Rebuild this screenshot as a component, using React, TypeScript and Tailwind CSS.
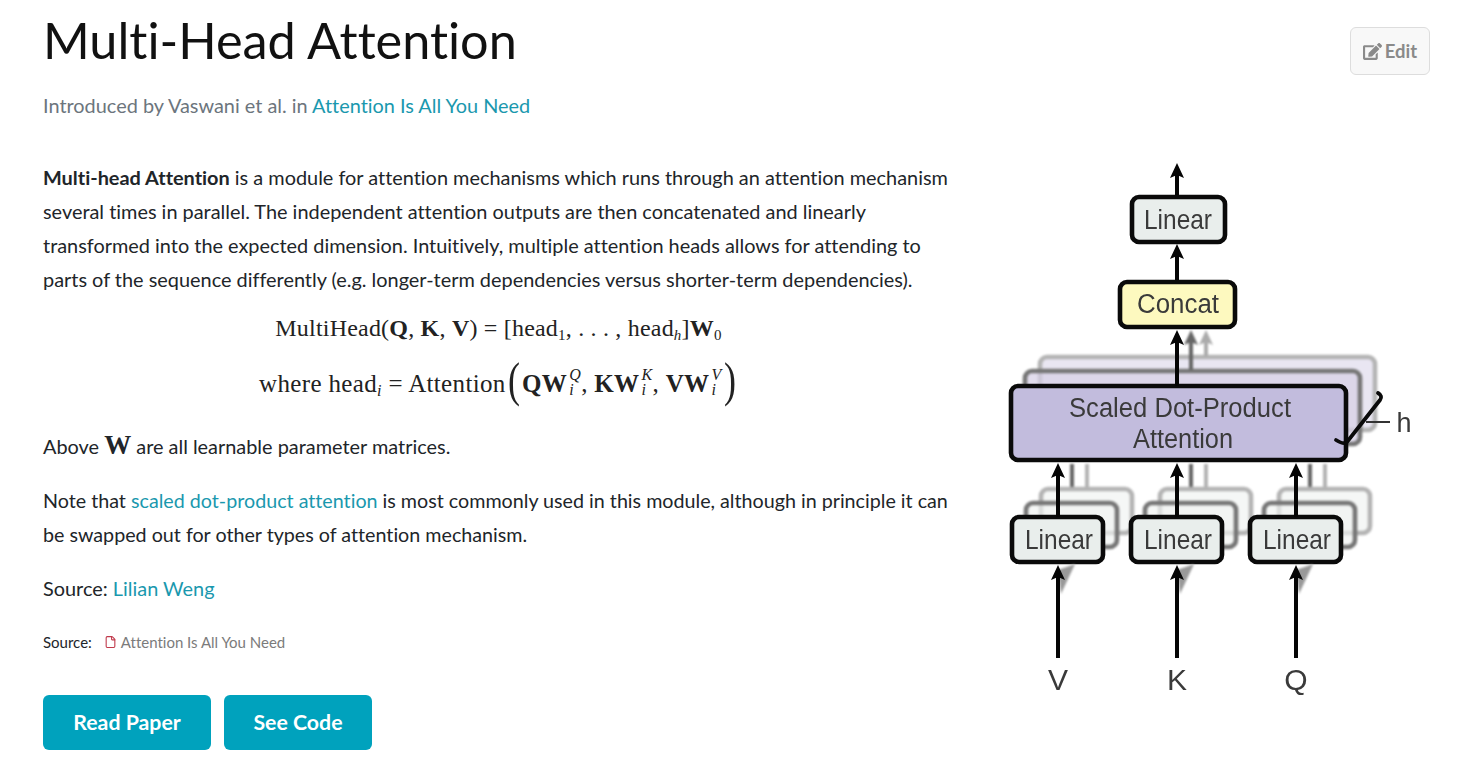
import { FaEdit } from "react-icons/fa";
import { File } from "lucide-react";

const font = { fontFamily: '"Liberation Sans", sans-serif' };
const ink = "#3a3a3a";

const Box = ({ x, y, w, h, fill, stroke = "#0a0a0a", sw = 4.6, r = 7, fo = 1, so = 1 }: any) => (
  <rect x={x} y={y} width={w} height={h} rx={r} fill={fill} fillOpacity={fo} stroke={stroke} strokeOpacity={so} strokeWidth={sw} />
);

const Arrow = ({ x, y1, y2, color = "#050505", sw = 4 }: any) => (
  <g>
    <line x1={x} y1={y1} x2={x} y2={y2 + 8} stroke={color} strokeWidth={sw} />
    <path d={`M${x} ${y2} L${x + 7} ${y2 + 15} L${x} ${y2 + 12} L${x - 7} ${y2 + 15} Z`} fill={color} />
  </g>
);

const Lin = ({ x, t }: any) => (
  <text x={x} y={t} textAnchor="middle" fontSize="28" fill={ink} style={font} textLength={68} lengthAdjust="spacingAndGlyphs">
    Linear
  </text>
);

function Diagram() {
  const ox = 1000;
  const oy = 150;
  const X = (v: number) => v - ox;
  const Y = (v: number) => v - oy;
  const lower = [
    { bx: 1011, ax: 1058 },
    { bx: 1130, ax: 1177 },
    { bx: 1249, ax: 1296 },
  ];
  return (
    <svg width="430" height="560" viewBox="0 0 430 560" className="block shrink-0 blur-[0.6px]">
      {/* top */}
      <Arrow x={X(1177)} y1={Y(196)} y2={Y(163)} />
      <Box x={X(1132)} y={Y(197)} w={93} h={45} fill="#e9eeec" />
      <Lin x={X(1178)} t={Y(229)} />
      <Arrow x={X(1177)} y1={Y(281)} y2={Y(244)} />
      <Box x={X(1120)} y={Y(282)} w={115} h={45} fill="#fdf9bf" />
      <text x={X(1178)} y={Y(313)} textAnchor="middle" fontSize="27" fill={ink} style={font} textLength={82} lengthAdjust="spacingAndGlyphs">
        Concat
      </text>

      {/* stacked attention */}
      <g className="blur-[0.8px]">
        <Box x={X(1040)} y={Y(357)} w={335} h={73} fill="#e9e6f2" stroke="#b4b4b4" />
        <Arrow x={X(1206)} y1={Y(356)} y2={Y(330)} color="#ababab" />
        <Box x={X(1025)} y={Y(371)} w={335} h={73} fill="#d5cfe6" fo={0.7} stroke="#767676" />
        <Arrow x={X(1191)} y1={Y(370)} y2={Y(330)} color="#666" />
      </g>
      <Box x={X(1011)} y={Y(386)} w={335} h={74} fill="#c2bcdd" />
      <Arrow x={X(1177)} y1={Y(386)} y2={Y(330)} />
      <text x={X(1180)} y={Y(417)} textAnchor="middle" fontSize="27" fill={ink} style={font} textLength={222} lengthAdjust="spacingAndGlyphs">
        Scaled Dot-Product
      </text>
      <text x={X(1183)} y={Y(448)} textAnchor="middle" fontSize="27" fill={ink} style={font} textLength={100} lengthAdjust="spacingAndGlyphs">
        Attention
      </text>
      <path d="M1378 393 Q1383 396 1380 400 L1347 442 Q1344 445 1336 440" transform={`translate(${-ox} ${-oy})`} fill="none" stroke="#0a0a0a" strokeWidth="3.8" strokeLinecap="round" />
      <line x1={X(1366)} y1={Y(422)} x2={X(1390)} y2={Y(422)} stroke="#333" strokeWidth="2" />
      <text x={X(1404)} y={Y(432)} textAnchor="middle" fontSize="27" fill={ink} style={font}>
        h
      </text>

      {/* lower linear groups */}
      {lower.map((l) => (
        <g key={l.bx}>
          <g className="blur-[0.8px]">
            <line x1={X(l.ax + 29)} y1={Y(464)} x2={X(l.ax + 29)} y2={Y(490)} stroke="#b4b4b4" strokeWidth="4" />
            <line x1={X(l.ax + 14)} y1={Y(464)} x2={X(l.ax + 14)} y2={Y(504)} stroke="#666" strokeWidth="4" />
            <Box x={l.bx + 30 - ox} y={Y(489)} w={91} h={44} fill="#f5f7f6" stroke="#b4b4b4" />
            <Box x={l.bx + 15 - ox} y={Y(503)} w={91} h={44} fill="#eff2f1" fo={0.65} stroke="#767676" />
          </g>
          <Box x={l.bx + 1 - ox} y={Y(517)} w={91} h={45} fill="#e9eeec" />
          <Arrow x={X(l.ax)} y1={Y(517)} y2={Y(463)} />
          <Lin x={X(l.ax + 1)} t={Y(549)} />
          <path className="blur-[0.8px]" d={`M${l.ax + 17 - ox} ${Y(564)} L${l.ax + 3 - ox} ${Y(594)} L${l.ax - ox} ${Y(570)} Z`} fill="#999" />
          <Arrow x={X(l.ax)} y1={Y(658)} y2={Y(565)} />
        </g>
      ))}
      {[
        ["V", 1058],
        ["K", 1177],
        ["Q", 1296],
      ].map(([t, x]) => (
        <text key={t as string} x={X(x as number)} y={Y(690)} textAnchor="middle" fontSize="30" fill={ink} style={font}>
          {t}
        </text>
      ))}
    </svg>
  );
}

const B = ({ children }: any) => <b className="font-bold">{children}</b>;

const SubSup = ({ sub, sup }: any) => (
  <span className="inline-flex flex-col items-start leading-[13px] text-[16px] italic ml-[2px] -translate-y-[1px]">
    <span className="-mt-2">{sup}</span>
    <span className="-mb-2 mt-[2px]">{sub}</span>
  </span>
);

function Formula() {
  return (
    <div className="font-['Liberation_Serif',serif] leading-none text-[#222]">
      <div className="flex h-[34px] justify-center items-center text-[24px] tracking-[0.2px]">
        <span className="whitespace-pre">
          MultiHead(<B>Q</B>, <B>K</B>, <B>V</B>) = [head<sub className="text-[15px]">1</sub>, . . . , head<sub className="text-[15px] italic">h</sub>]<B>W</B><sub className="text-[15px]">0</sub>
        </span>
      </div>
      <div className="flex h-[56px] mt-[10px] justify-center items-center whitespace-pre text-[25px] tracking-[0.35px]">
        <span>where head<sub className="text-[16px] italic">i</sub> = Attention</span>
        <span className="text-[48px] font-light -mt-[6px] scale-x-75">(</span>
        <B>QW</B>
        <SubSup sup="Q" sub="i" />
        <span>, </span>
        <B>KW</B>
        <SubSup sup="K" sub="i" />
        <span>, </span>
        <B>VW</B>
        <SubSup sup="V" sub="i" />
        <span className="text-[48px] font-light -mt-[6px] scale-x-75">)</span>
      </div>
    </div>
  );
}

export default function App() {
  return (
    <div className="h-[777px] overflow-hidden bg-white font-['Lato',sans-serif] [font-variant-ligatures:none] text-[#212529] pl-[43px] pr-[30px]">
      <div className="flex justify-between items-start h-[150px]">
        <div>
          <h1 className="text-[50.4px] leading-[60px] font-normal text-[#111] mt-[10px]">Multi-Head Attention</h1>
          <p className="text-[19.9px] leading-[34px] text-[#6c757d] mt-[18px]">
            Introduced by Vaswani et al. in <a className="text-[#1a98ae]">Attention Is All You Need</a>
          </p>
        </div>
        <button className="mt-[27px] w-[80px] h-[48px] border border-[#dddddd] rounded-[6px] bg-[#f8f8f8] text-[#8a8a8a] font-bold text-[18.5px] flex items-center justify-center gap-[3px] pt-[1px]">
          <FaEdit className="text-[19px]" />
          Edit
        </button>
      </div>
      <div className="flex">
        <div className="w-[957px] shrink-0 pr-[46px]">
          <div className="text-[19.9px] leading-[34px] mt-[10px]">
            <p>
              <b>Multi-head Attention</b> is a module for attention mechanisms which runs through an attention mechanism several times in parallel. The independent attention outputs are then concatenated and linearly transformed into the expected dimension. Intuitively, multiple attention heads allows for attending to parts of the sequence differently (e.g. longer-term dependencies versus shorter-term dependencies).
            </p>
            <div className="mt-[15px]">
              <Formula />
            </div>
            <p className="mt-[18px]">
              Above <span className="font-['Liberation_Serif',serif] font-bold text-[27px] leading-[20px]">W</span> are all learnable parameter matrices.
            </p>
            <p className="mt-[21px] text-[19.7px]">
              Note that <a className="text-[#1a98ae]">scaled dot-product attention</a> is most commonly used in this module, although in principle it can be swapped out for other types of attention mechanism.
            </p>
            <p className="mt-[19px]">
              Source: <a className="text-[#1a98ae]">Lilian Weng</a>
            </p>
          </div>
          <div className="flex items-center text-[15px] leading-[20px] mt-[27px] text-[#212529]">
            <span>Source:</span>
            <File className="w-[13px] h-[14px] ml-[12px] mr-[4px] text-[#c0394b]" strokeWidth={2} />
            <span className="text-[#7b7b7b]">Attention Is All You Need</span>
          </div>
          <div className="flex gap-[13px] mt-[43px]">
            <button className="w-[168px] h-[55px] rounded-[6px] bg-[#00a2bd] text-white font-bold text-[21.3px]">Read Paper</button>
            <button className="w-[148px] h-[55px] rounded-[6px] bg-[#00a2bd] text-white font-bold text-[21.3px]">See Code</button>
          </div>
        </div>
        <Diagram />
      </div>
    </div>
  );
}
